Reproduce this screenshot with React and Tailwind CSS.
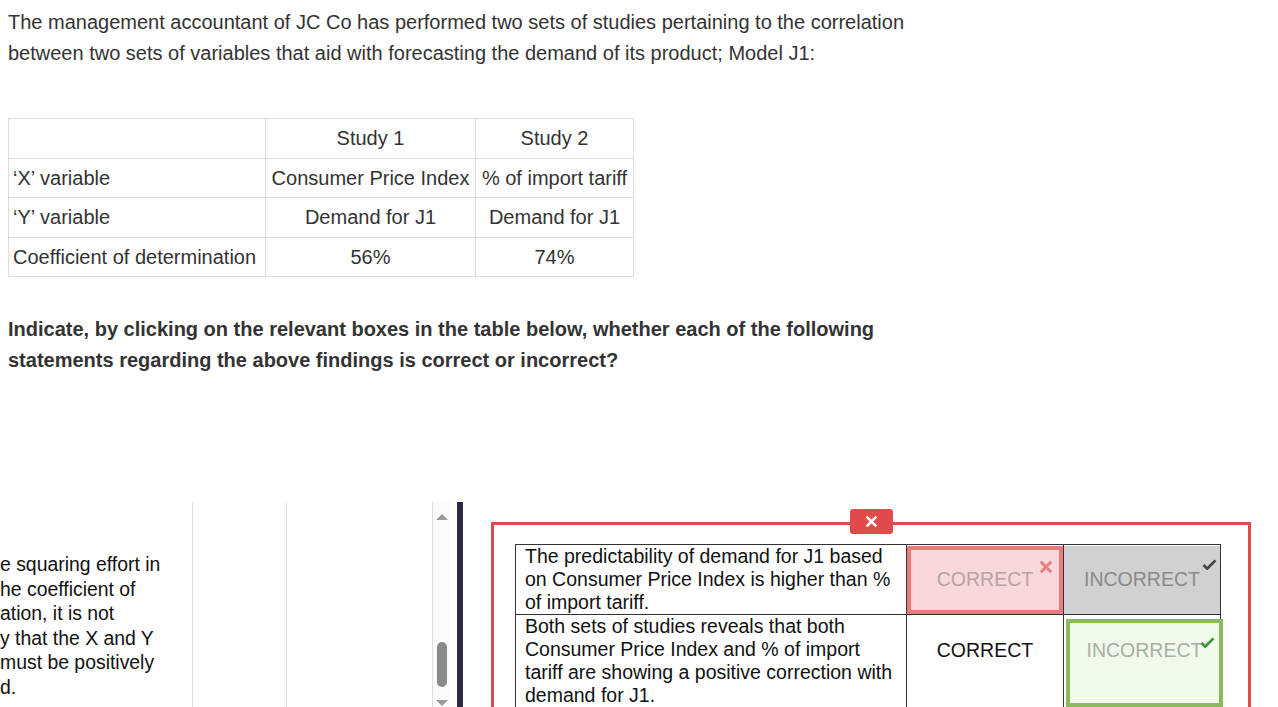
import React from 'react';

const font = { fontFamily: '"Liberation Sans", Arial, sans-serif' };

function Tick({ color, className }) {
    return (
        <svg viewBox="0 0 16 12" className={className}>
            <path d="M1.5 6.5 L5.5 10.5 L14.5 1.5" fill="none" stroke={color} strokeWidth="3" strokeLinejoin="miter" />
        </svg>
    );
}

function Cross({ color, className, width = 3 }) {
    return (
        <svg viewBox="0 0 12 12" className={className}>
            <path d="M1.5 1.5 L10.5 10.5 M10.5 1.5 L1.5 10.5" fill="none" stroke={color} strokeWidth={width} />
        </svg>
    );
}

const studies = [
    ['', 'Study 1', 'Study 2'],
    ['\u2018X\u2019 variable', 'Consumer Price Index', '% of import tariff'],
    ['\u2018Y\u2019 variable', 'Demand for J1', 'Demand for J1'],
    ['Coefficient of determination', '56%', '74%'],
];

const clipped = [
    'e squaring effort in',
    'he coefficient of',
    'ation, it is not',
    'y that the X and Y',
    'must be positively',
    'd.',
];

export default function App() {
    return (
        <div className="w-[1278px] h-[707px] overflow-hidden bg-white text-[#333]" style={font}>
            {/* Question stem */}
            <p className="pl-2 pt-[7px] text-[20px] leading-[31px]">
                The management accountant of JC Co has performed two sets of studies pertaining to the correlation
                <br />
                between two sets of variables that aid with forecasting the demand of its product; Model J1:
            </p>

            <table className="ml-2 mt-[49px] border-collapse text-[20px]">
                <tbody>
                    {studies.map((row, i) => (
                        <tr key={i} className="h-[39.5px]">
                            <td className="w-[257px] border border-[#ddd] px-[4px]">{row[0]}</td>
                            <td className="w-[210px] border border-[#ddd] px-[4px] text-center">{row[1]}</td>
                            <td className="w-[158px] border border-[#ddd] px-[4px] text-center">{row[2]}</td>
                        </tr>
                    ))}
                </tbody>
            </table>

            <p className="pl-2 mt-[37px] text-[20px] leading-[31px] font-bold">
                Indicate, by clicking on the relevant boxes in the table below, whether each of the following
                <br />
                statements regarding the above findings is correct or incorrect?
            </p>

            {/* Answer area */}
            <div className="mt-[126px] flex h-[206px] overflow-hidden">
                <div className="w-[192px] pt-[50px] text-[19.4px] leading-[24.6px] text-[#111] whitespace-nowrap overflow-hidden">
                    {clipped.map((l) => (
                        <div key={l}>{l}</div>
                    ))}
                </div>
                <div className="w-[94px] border-l border-[#ddd]" />
                <div className="w-[146px] border-l border-[#ddd]" />
                <div className="w-[19px] border-l border-[#ddd] bg-[#fafafa] flex flex-col items-center justify-between pt-[12px] pb-[2px]">
                    <div className="w-0 h-0 border-l-[6px] border-r-[6px] border-b-[6px] border-l-transparent border-r-transparent border-b-[#999]" />
                    <div className="flex flex-col items-center gap-[13px]">
                        <div className="w-[10px] h-[45px] rounded-[5px] bg-[#8a8a8a]" />
                        <div className="w-0 h-0 border-l-[6px] border-r-[6px] border-t-[6px] border-l-transparent border-r-transparent border-t-[#999]" />
                    </div>
                </div>
                <div className="w-[6px] ml-[6px] bg-[#2b2947]" />

                <div className="pl-[28px] pt-[20px]">
                    <div className="relative w-[760px] h-[300px] border-[3px] border-[#e04a4a] pl-[21px] pt-[19px]">
                        <div className="absolute left-[356px] top-[-16px] w-[43px] h-[25px] rounded-[3px] bg-[#e04a4a] flex items-center justify-center">
                            <Cross color="#fff" className="w-[13px] h-[13px]" width={2.6} />
                        </div>

                        <table className="border-collapse text-[19.5px] leading-[23px] text-[#111]">
                            <tbody>
                                <tr className="h-[69px]">
                                    <td className="w-[391px] border border-[#333] pl-[9px] pr-[4px] align-top">
                                        The predictability of demand for J1 based on Consumer Price Index is higher than % of import tariff.
                                    </td>
                                    <td className="w-[157px] border border-[#333] p-0">
                                        <div className="relative h-[68px] bg-[#f8d8da] border-[4px] border-[#e77b7d] flex items-center justify-center text-[#b9a2a4]">
                                            CORRECT
                                            <Cross color="#ea7f82" className="absolute right-[6px] top-[10px] w-[14px] h-[14px]" width={2.6} />
                                        </div>
                                    </td>
                                    <td className="w-[157px] border border-[#333] p-0">
                                        <div className="relative h-[68px] bg-[#d1d1d1] flex items-center justify-center text-[#8a8a8a]">
                                            INCORRECT
                                            <Tick color="#444" className="absolute right-[3px] top-[13px] w-[15px] h-[11px]" />
                                        </div>
                                    </td>
                                </tr>
                                <tr className="h-[94px]">
                                    <td className="border border-[#333] pl-[9px] pr-[4px] align-top">
                                        Both sets of studies reveals that both Consumer Price Index and % of import tariff are showing a positive correction with demand for J1.
                                    </td>
                                    <td className="border border-[#333] align-top pt-[24px] text-center">CORRECT</td>
                                    <td className="border border-[#333] p-0 align-top">
                                        <div className="relative ml-[2px] mt-[4px] mr-[-3px] h-[88px] bg-[#f0fbea] border-[4px] border-[#8cb95d] pt-[16px] text-center text-[#a9aea6]">
                                            INCORRECT
                                            <Tick color="#3d963c" className="absolute right-[4px] top-[14px] w-[15px] h-[11px]" />
                                        </div>
                                    </td>
                                </tr>
                            </tbody>
                        </table>
                    </div>
                </div>
            </div>
        </div>
    );
}
